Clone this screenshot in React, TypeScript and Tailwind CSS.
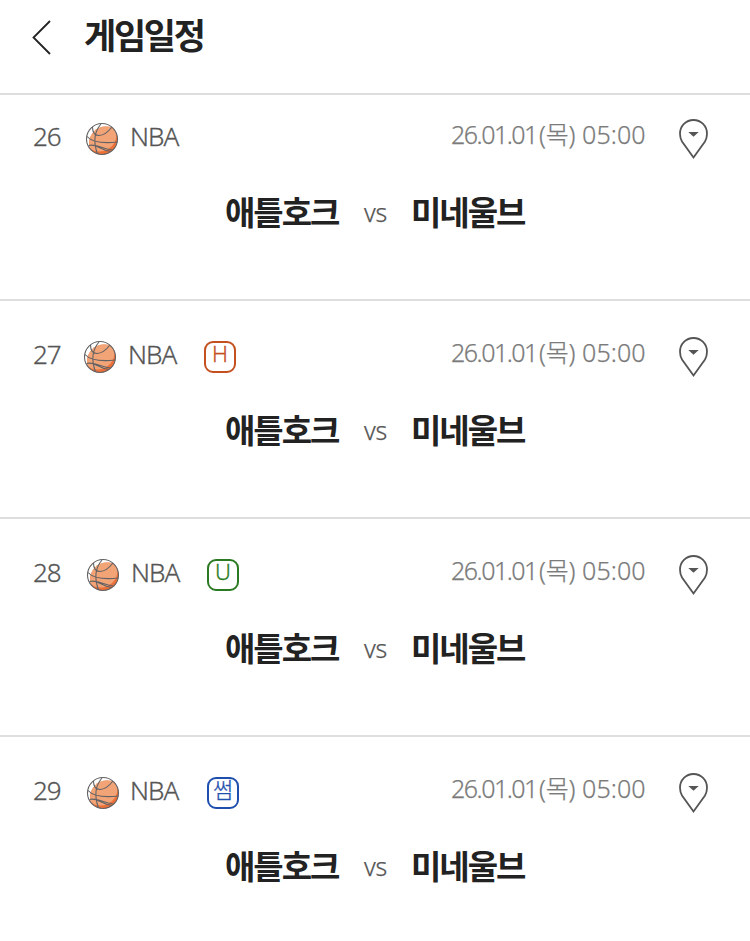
type Game = {
  no: number;
  league: string;
  tag?: string;
  tagClass?: string;
  ballClass: string;
  leagueClass: string;
  date: string;
  day: string;
  time: string;
  home: string;
  away: string;
};

const base = {
  league: "NBA",
  date: "26.01.01",
  day: "목",
  time: "05:00",
  home: "애틀호크",
  away: "미네울브",
};

const games: Game[] = [
  { ...base, no: 26, ballClass: "ml-[52px]", leagueClass: "ml-[11px]" },
  {
    ...base,
    no: 27,
    tag: "H",
    tagClass: "ml-[76px] border-[#c5501f] text-[#c5501f]",
    ballClass: "ml-[50px]",
    leagueClass: "ml-[11px]",
  },
  {
    ...base,
    no: 28,
    tag: "U",
    tagClass: "ml-[76px] border-[#2a7a22] text-[#2a7a22]",
    ballClass: "ml-[53px]",
    leagueClass: "ml-[11px]",
  },
  {
    ...base,
    no: 29,
    tag: "썸",
    tagClass: "ml-[76px] border-[#1f4fae] text-[#1f4fae]",
    ballClass: "ml-[53px]",
    leagueClass: "ml-[10px]",
  },
];

function Basketball() {
  return (
    <svg width="34" height="34" viewBox="0 0 34 34" fill="none">
      <defs>
        <clipPath id="ball">
          <circle cx="17" cy="17" r="15.5" />
        </clipPath>
        <clipPath id="ball-fill">
          <circle cx="21" cy="21.500" r="17" />
        </clipPath>
      </defs>
      <g clipPath="url(#ball)">
        <g clipPath="url(#ball-fill)">
          <rect width="34" height="34" fill="#ec7037" />
          <circle cx="14.500" cy="12.500" r="17" fill="#f2a477" />
        </g>
      </g>
      <g stroke="#626265" strokeWidth="1.1">
        <circle cx="17" cy="17" r="15.5" />
        <path d="M16 2C9 10 8.500 21 12.500 32M7.500 5C7.500 16 18 16.500 27 5M2 14.500C8 21 19 21.500 32.500 20M3.500 23.500C12 21 14 28 26 29.500M10.500 23.500C15 24.500 20 27 27.500 28" />
      </g>
    </svg>
  );
}

function Pin() {
  return (
    <svg className="mt-1 ml-8" width="32" height="42" viewBox="0 0 32 42" fill="none">
      <path
        d="M15.500 39.500L4 23.500C2.300 20.500 2 18 2 15.800C2 8 8 2 15.500 2S29 8 29 15.800C29 18 28.700 20.500 27 23.500Z"
        stroke="#555"
        strokeWidth="1.8"
      />
      <path d="M10.300 14H20.700L15.500 18.800Z" fill="#555" />
    </svg>
  );
}

function GameRow({ game }: { game: Game }) {
  return (
    <li className="border-b-2 border-[#dedede] pt-3 pb-[52px] first:pt-0">
      <div className="flex h-[84px] items-center justify-between pr-10 pl-[33px]">
        <div className="flex items-center text-[26px] tracking-[-1px] text-[#555] [-webkit-text-stroke:0.3px]">
          <span className="-mt-0.5 w-0 whitespace-nowrap">{game.no}</span>
          <span className={`mt-1 ${game.ballClass}`}>
            <Basketball />
          </span>
          <span className="-mt-0.5 w-0">
            <span className={game.leagueClass}>{game.league}</span>
          </span>
          {game.tag && (
            <span
              className={`mt-1 flex h-8 w-8 translate-x-[11px] justify-center rounded-[9px] border-2 text-[22px] leading-[21px] tracking-normal ${game.tagClass}`}
            >
              {game.tag}
            </span>
          )}
        </div>
        <div className="flex items-center">
          <p className="-mt-1 flex text-[25px] whitespace-nowrap text-[#7b7b7b] [-webkit-text-stroke:0.25px]">
            <span className="w-[88px] tracking-[-1.500px]">{game.date}</span>
            <span className="w-[43px] tracking-[-0.2px]">({game.day})</span>
            <span className="w-[64px] tracking-[0.1px]">{game.time}</span>
          </p>
          <Pin />
        </div>
      </div>
      <div className="flex h-[68px] items-center justify-center pl-px">
        <span className="w-[115px] text-[33px] font-bold tracking-[-2px] whitespace-nowrap text-[#222]">
          {game.home}
        </span>
        <span className="mr-[22px] ml-6 w-[25px] text-[25px] tracking-[-0.3px] text-[#555] [-webkit-text-stroke:0.25px]">
          vs
        </span>
        <span className="w-[115px] text-[33px] font-bold tracking-[-2px] whitespace-nowrap text-[#222]">
          {game.away}
        </span>
      </div>
    </li>
  );
}

export default function App() {
  return (
    <main className="h-[941px] overflow-hidden bg-white font-['Noto_Sans','Noto_Sans_CJK_KR',sans-serif] font-light">
      <header className="flex h-[95px] items-start border-b-2 border-[#dedede] pl-8">
        <svg className="mt-5" width="20" height="35" viewBox="0 0 20 35" fill="none">
          <path d="M18 1L1.500 17.500L18 34" stroke="#222" strokeWidth="1.8" />
        </svg>
        <h1 className="ml-8 pt-3 text-[35px] leading-[48px] font-bold tracking-[-2.300px] text-[#222]">
          게임일정
        </h1>
      </header>
      <ul>
        {games.map((game) => (
          <GameRow key={game.no} game={game} />
        ))}
      </ul>
    </main>
  );
}
